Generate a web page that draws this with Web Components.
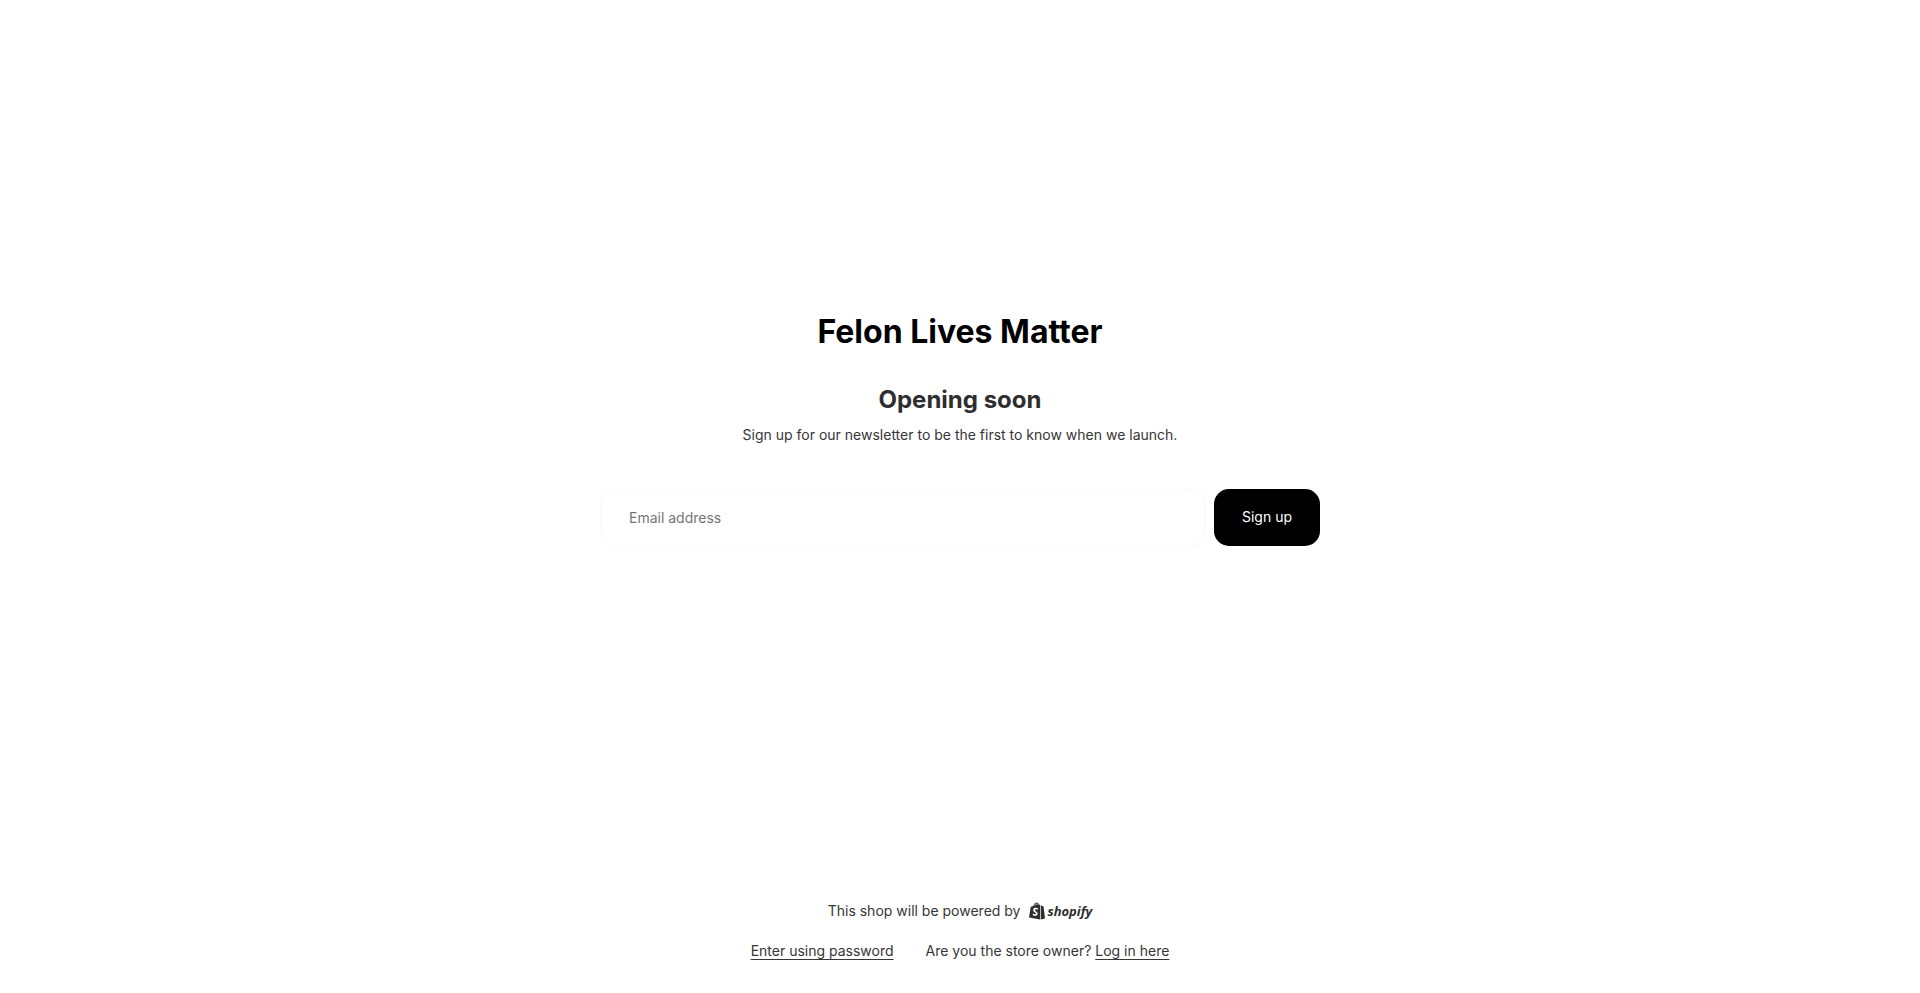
<!DOCTYPE html>
<html lang="en">
<head>
<meta charset="utf-8">
<meta name="viewport" content="width=device-width, initial-scale=1">
<title>Felon Lives Matter</title>
<style>
  body { margin: 0; background: #fff; color: #363636; font: 14px/24px Inter, "Liberation Sans", sans-serif; }
</style>
</head>
<body>
<password-page>
  <shop-title slot="main">Felon Lives Matter</shop-title>
  <shop-intro slot="main">
    <span slot="heading">Opening soon</span>
    Sign up for our newsletter to be the first to know when we launch.
  </shop-intro>
  <newsletter-form slot="main"></newsletter-form>
  <shop-footer slot="footer"></shop-footer>
</password-page>
<script>
  const define = (name, html) => customElements.define(name, class extends HTMLElement {
    constructor() {
      super();
      const template = document.createElement('template');
      template.innerHTML = html;
      this.attachShadow({ mode: 'open' }).append(template.content.cloneNode(true));
    }
  });

  define('shopify-logo', `
    <style>
      :host { display: inline-flex; color: #2e2e2e; }
      a { display: inline-flex; align-items: center; gap: 3px; color: inherit; text-decoration: none; font: italic 700 13px/20px "Open Sans", sans-serif; }
      svg { width: 16px; height: 18px; }
    </style>
    <a href="#shopify"><svg viewBox="0 0 32 36" aria-hidden="true">
      <path fill="currentColor" d="M3.500 9.500l5-1.600C9.300 4 12 1 15 .8c1 0 2 .7 2.600 1.700 1.800 0 2.900 1.500 3.400 3.300l1.200-.3 .5 29.500L0 31z"/>
      <path fill="currentColor" d="M23.500 5.800l2.300 2.200 3.200.3L32 33l-7.800 2z"/>
      <path fill="#fff" d="M10 6.900C11 4.200 12.800 2.500 14.400 2.300c.6 0 1 .3 1.300.8C13.600 4 12.500 5.500 12 6.300zM13.700 5.800c.6-1 1.400-1.600 2.400-2 .2.5.3 1 .3 1.600zM17.800 4c.8.2 1.100 1 1.400 2l-1.300.3z"/>
      <path fill="none" stroke="#fff" stroke-width="3.400" d="M17.500 14c-4-2-7.500-.6-7.500 2.300 0 3.500 5.700 3.500 5.700 7 0 3.200-4 3.500-7.800 1.200"/>
    </svg><span>shopify</span></a>`);

  define('shop-title', `
    <style>
      :host { display: block; }
      h1 { margin: 0; color: #000; font-size: 32px; line-height: 40px; font-weight: 700; text-align: center; }
    </style>
    <h1><slot></slot></h1>`);

  define('shop-intro', `
    <style>
      :host { display: block; margin-top: 32px; text-align: center; }
      h2 { margin: 0; color: #2e2e2e; font-size: 24px; line-height: 32px; font-weight: 700; }
      p { margin: 7px 0 0; }
    </style>
    <h2><slot name="heading"></slot></h2>
    <p><slot></slot></p>`);

  define('newsletter-form', `
    <style>
      :host { display: block; margin-top: 42px; }
      form { display: flex; gap: 8px; }
      input, button { box-sizing: border-box; height: 57px; margin: 0; border-radius: 15px; font: inherit; }
      input { flex: 1; min-width: 0; padding: 0 28px; border: 1px solid #f9f9f9; background: #fff; color: #2e2e2e; }
      input::placeholder { color: #757575; opacity: 1; }
      button { padding: 0 28px; border: 0; background: #000; color: #fff; cursor: pointer; }
    </style>
    <form>
      <input id="email" type="email" aria-label="Email address" placeholder="Email address">
      <button type="submit">Sign up</button>
    </form>`);

  define('shop-footer', `
    <style>
      :host { display: block; text-align: center; }
      .powered { display: flex; justify-content: center; align-items: center; gap: 8px; }
      .links { display: flex; flex-wrap: wrap; justify-content: center; gap: 4px 32px; margin-top: 16px; }
      .links a { color: inherit; text-underline-offset: 3px; }
    </style>
    <div class="powered"><span>This shop will be powered by</span><shopify-logo></shopify-logo></div>
    <div class="links">
      <a href="#password">Enter using password</a>
      <span>Are you the store owner? <a href="#login">Log in here</a></span>
    </div>`);

  define('password-page', `
    <style>
      :host { box-sizing: border-box; display: flex; flex-direction: column; min-height: 100vh; padding: 0 24px 30px; }
      main { flex: 1; display: flex; flex-direction: column; justify-content: center; width: 100%; max-width: 720px; margin: 0 auto; }
      footer { padding-top: 42px; }
    </style>
    <main><slot name="main"></slot></main>
    <footer><slot name="footer"></slot></footer>`);
</script>
</body>
</html>
